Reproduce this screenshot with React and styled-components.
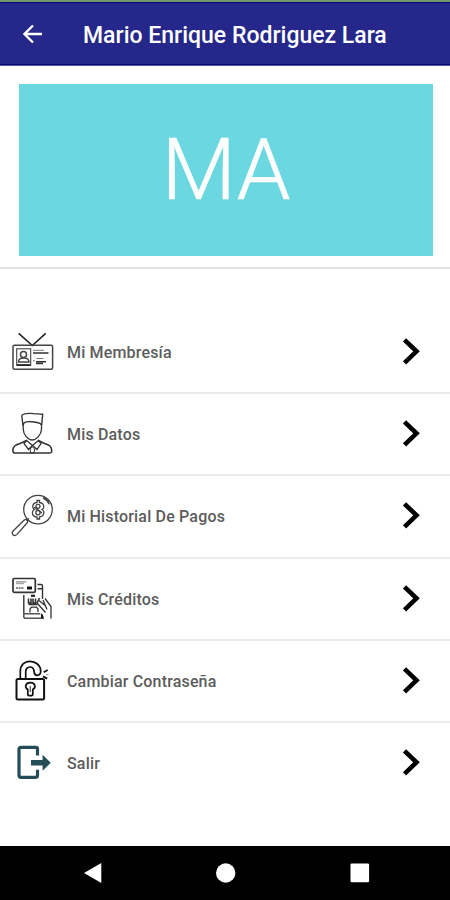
import styled, { createGlobalStyle } from "styled-components"

// menu : entries of the profile page, top to bottom
const menu = [
  { label: "Mi Membresía", Icon: MembershipIcon },
  { label: "Mis Datos", Icon: PersonIcon },
  { label: "Mi Historial De Pagos", Icon: PaymentsIcon },
  { label: "Mis Créditos", Icon: CreditsIcon },
  { label: "Cambiar Contraseña", Icon: LockIcon },
  { label: "Salir", Icon: ExitIcon },
]

function MembershipIcon() {
  return (
    <Icon44 viewBox="0 0 44 44" stroke="#444" strokeWidth="1.1">
      <path d="M7.7 3.3 21.3 15.500 34.7 3.3" stroke="#222" strokeWidth="1.600" />
      <rect x="2" y="15.3" width="39.6" height="24" rx="1.5" strokeWidth="1.5" />
      <rect x="5.7" y="18.8" width="14" height="16.6" />
      <circle cx="12.5" cy="24.5" r="3" strokeWidth="1.5" />
      <path d="M7.5 32c0-3 2-4 5-4s5.500 1 5.500 4z" strokeWidth="1.4" />
      <path d="M6 35h13.500" strokeWidth="1.700" stroke="#222" />
      <path d="M22 20.300h11M22 30.800h2M25.500 28.500h7" strokeWidth="1" stroke="#777" />
      <path d="M22 23h15.500M25 31.800h10M25 33.600h7" strokeWidth="1.500" stroke="#333" />
    </Icon44>
  )
}

function PersonIcon() {
  return (
    <Icon44 viewBox="0 0 44 44" stroke="#333" strokeWidth="1.4">
      <path d="M12 13.500 10.800 4c0-2.500 8-3 12-2.400 3 .3 6 .2 8.900.6L30.700 13" />
      <path d="M12.300 13c-.3-3 3.500-3.800 9-3.200 4.500.5 8.500.5 9 3.200" />
      <path d="M12.200 12v5c0 5.500 5 11 9 11s9.300-5.500 9.300-11v-5" strokeWidth="1.300" />
      <path d="M15.500 28.500 9 31.500c-5 1.500-7 3-7.200 7 0 2 .8 2.600 2.700 2.600h33.600c2 0 2.800-.7 2.600-2.600-.3-4-2-5.500-7.200-7l-6-3" strokeWidth="1.500" />
      <path d="M15.500 28.500 13 31.500l4.500 6 4-4 4.500 4 4-6-2.500-3-6 5z" strokeWidth="1.300" />
      <path d="m19 37 2.300-2 2.400 2-.7 4h-3.300z" strokeWidth="1" />
    </Icon44>
  )
}

function PaymentsIcon() {
  return (
    <Icon44 viewBox="0 0 44 44" stroke="#444" strokeWidth="1.3">
      <circle cx="27" cy="15.600" r="14.300" />
      <path d="m13.300 26-11 10.800c-2.700 2.800.8 6.400 3.500 3.800l10-11.300c2.200-2.400-.3-5-2.500-3.300z" />
      <path d="m15.500 26.800 2.200-2.500M32 3.800c3 1.500 5 3.500 6.300 6.500M33 3l5 5" />
      <path d="M26 6.500h2.500v2c3 .3 4.500 2 4.200 4.500-.1 1.200-.8 2-1.700 2.500 1.400.7 2 2 1.800 3.500-.2 2.300-2 3.700-4.300 4v2H26v-2c-2.900-.3-4.700-2-4.600-4.300 0-1.500.7-2.600 2-3.200-1.200-.7-1.800-1.700-1.700-3 .2-2.300 1.900-3.800 4.300-4z" />
      <circle cx="27" cy="12.300" r="2" />
      <circle cx="27" cy="18.600" r="2.200" />
      <path d="m23 13 8 6" strokeWidth="1.500" />
    </Icon44>
  )
}

function CreditsIcon() {
  return (
    <Icon44 viewBox="0 0 44 44" stroke="#333" strokeWidth="1.4">
      <rect x="2" y="1.500" width="22.300" height="13.800" rx="1.300" strokeWidth="1.700" />
      <path d="M5 4.800h10.500M5 6.500h8" stroke="#aaa" />
      <path d="M5 11h8" stroke="#888" strokeDasharray="2 .6" strokeWidth="2" />
      <path d="M16 11h5" strokeWidth="3" stroke="#111" />
      <path d="M12.800 18v19M26.500 7.500h3.500c1 0 1.500.5 1.500 1.400V22M26.500 11.800h5" />
      <path d="M13.500 36.800h15.500M13.500 36.800c-1.200 1.500-1.200 3 0 4.400H33M30 36.500l2.500 4.500" strokeWidth="1.500" stroke="#555" />
      <path d="M20 18.800h4" strokeWidth="2.200" stroke="#222" />
      <path d="M17.500 21.500v4.500h2.500v-4.500M22 21.500v4.500h2.500v-4.500M28.500 21 26 26M17.500 27.500h9" strokeWidth="1.600" />
      <path d="M19 35.500v-3.500l1.500-1.800h5l1.500 1.800v3M26 26l8.500 9.500M28 23.500l5.500 4.500M32 23l4 9.500M34 21.500l6 8v12" strokeWidth="1.300" />
      <path d="M31 37.500v3.500" strokeWidth="2" stroke="#111" />
    </Icon44>
  )
}

function LockIcon() {
  return (
    <Icon44 viewBox="0 0 44 44" stroke="#111" strokeWidth="1.700">
      <rect x="5.500" y="20" width="27.600" height="20.600" rx="1.500" strokeWidth="2" />
      <path d="M9.300 20v-7.500C9.300 6 13.500 2.300 19 2.300s10.700 4 10.700 9.700c0 3-1.800 4.300-3.500 4.300s-2.900-1.200-3-3.200C23 9.800 21.500 8 19 8s-4.300 2-4.300 5v7" />
      <path d="M16.800 30.500c-3.600-2-2.400-6.800 2.500-6.800s6.100 4.800 2.500 6.800v5c0 1.600-5 1.600-5 0z" />
      <path d="M19.300 27v6" strokeWidth="1.200" stroke="#555" />
      <path d="m32.700 13.300 4-2.400M32 17.400l4.200 2.200" strokeWidth="1.800" />
      <path d="M35 15.600h2.600" strokeWidth="1" stroke="#999" />
    </Icon44>
  )
}

function ExitIcon() {
  return (
    <Icon44 viewBox="0 0 44 44" stroke="#244d58" strokeWidth="3.200">
      <path d="M26.500 14.500V8c0-1.200-.7-1.700-1.700-1.700H10C8.700 6.300 8 7 8 8.300v26c0 1.300.7 2 2 2h14.800c1 0 1.700-.6 1.700-1.700v-5.800" />
      <path d="M20 19h11.600v-5.300l8.200 8-8.200 8v-5.300H20z" fill="#244d58" stroke="none" />
    </Icon44>
  )
}

function App() {
  return (
    <Screen>
      <GlobalStyle />
      <Header>
        <BackIcon viewBox="0 0 20 20">
          <path d="M19 10H2M10 1.500 1.500 10l8.500 8.500" />
        </BackIcon>
        <Title>Mario Enrique Rodriguez Lara</Title>
      </Header>

      <Banner>
        <Initials>MA</Initials>
      </Banner>

      <Menu>
        {menu.map(({ label, Icon }) => (
          <Row key={label}>
            <Icon />
            <Label>{label}</Label>
            <Chevron viewBox="0 0 18 28">
              <path d="M2.500 1.800 14.500 13.300 2.500 24.800" />
            </Chevron>
          </Row>
        ))}
      </Menu>

      <NavBar>
        <svg width="20" height="20"><path d="M0 10 17.300 0v20z" fill="#fff" /></svg>
        <svg width="20" height="20"><circle cx="8.700" cy="10" r="9.700" fill="#fff" /></svg>
        <svg width="20" height="20"><rect x=".5" y=".5" width="18.600" height="18.800" rx="1.300" fill="#fff" /></svg>
      </NavBar>
    </Screen>
  )
}

const GlobalStyle = createGlobalStyle`
  body {
    margin: 0;
    background: #fff;
    font-family: Roboto, "Liberation Sans", sans-serif;
  }
`

const Screen = styled.div`
  display: flex;
  flex-direction: column;
  width: 450px;
  height: 900px;
  overflow: hidden;
  background: #fff;
`

const Header = styled.header`
  box-sizing: border-box;
  display: flex;
  align-items: center;
  height: 66px;
  padding: 0 0 0 23px;
  border-top: 2px solid #729a6c;
  border-bottom: 1px solid #5555b5;
  background: #25278a;
  box-shadow: inset 0 1px 0 #0c0c70, inset 0 -1px 0 #0c0c70;
`

const BackIcon = styled.svg`
  width: 20px;
  height: 20px;
  margin-right: 40px;
  fill: none;
  stroke: #fff;
  stroke-width: 2.3;
`

const Title = styled.h1`
  margin: 0;
  padding-top: 4px;
  color: #fff;
  font-size: 23px;
  font-weight: 500;
  line-height: 28px;
  white-space: nowrap;
`

const Banner = styled.section`
  box-sizing: border-box;
  height: 203px;
  padding: 18px 17px 11px 19px;
  border-bottom: 2px solid #e2e2e2;
`

const Initials = styled.div`
  display: flex;
  align-items: center;
  justify-content: center;
  height: 172px;
  background: #6ad7e1;
  color: #fff;
  font-size: 86px;
  font-weight: 300;
  line-height: 1;
  -webkit-text-stroke: 0.6px #fff;
`

const Menu = styled.nav`
  flex: 1;
  padding-top: 43px;
`

const Row = styled.div`
  box-sizing: border-box;
  display: flex;
  align-items: center;
  height: 82.2px;
  padding: 0 30px 0 11px;
  border-bottom: 2px solid #ebebeb;

  &:last-child {
    border-bottom-color: transparent;
  }
`

const Icon44 = styled.svg`
  width: 44px;
  height: 44px;
  margin-right: 12px;
  fill: none;
`

const Label = styled.span`
  flex: 1;
  padding-top: 2px;
  color: #5c5c5c;
  font-size: 16px;
  font-weight: 500;
  letter-spacing: 0.17px;
  line-height: 20px;
`

const Chevron = styled.svg`
  width: 18px;
  height: 28px;
  fill: none;
  stroke: #000;
  stroke-width: 4.6;
`

const NavBar = styled.footer`
  box-sizing: border-box;
  display: flex;
  align-items: center;
  justify-content: space-between;
  height: 54px;
  padding: 0 80px 0 84px;
  background: #000;

  svg {
    overflow: visible;
  }
`

export default App
